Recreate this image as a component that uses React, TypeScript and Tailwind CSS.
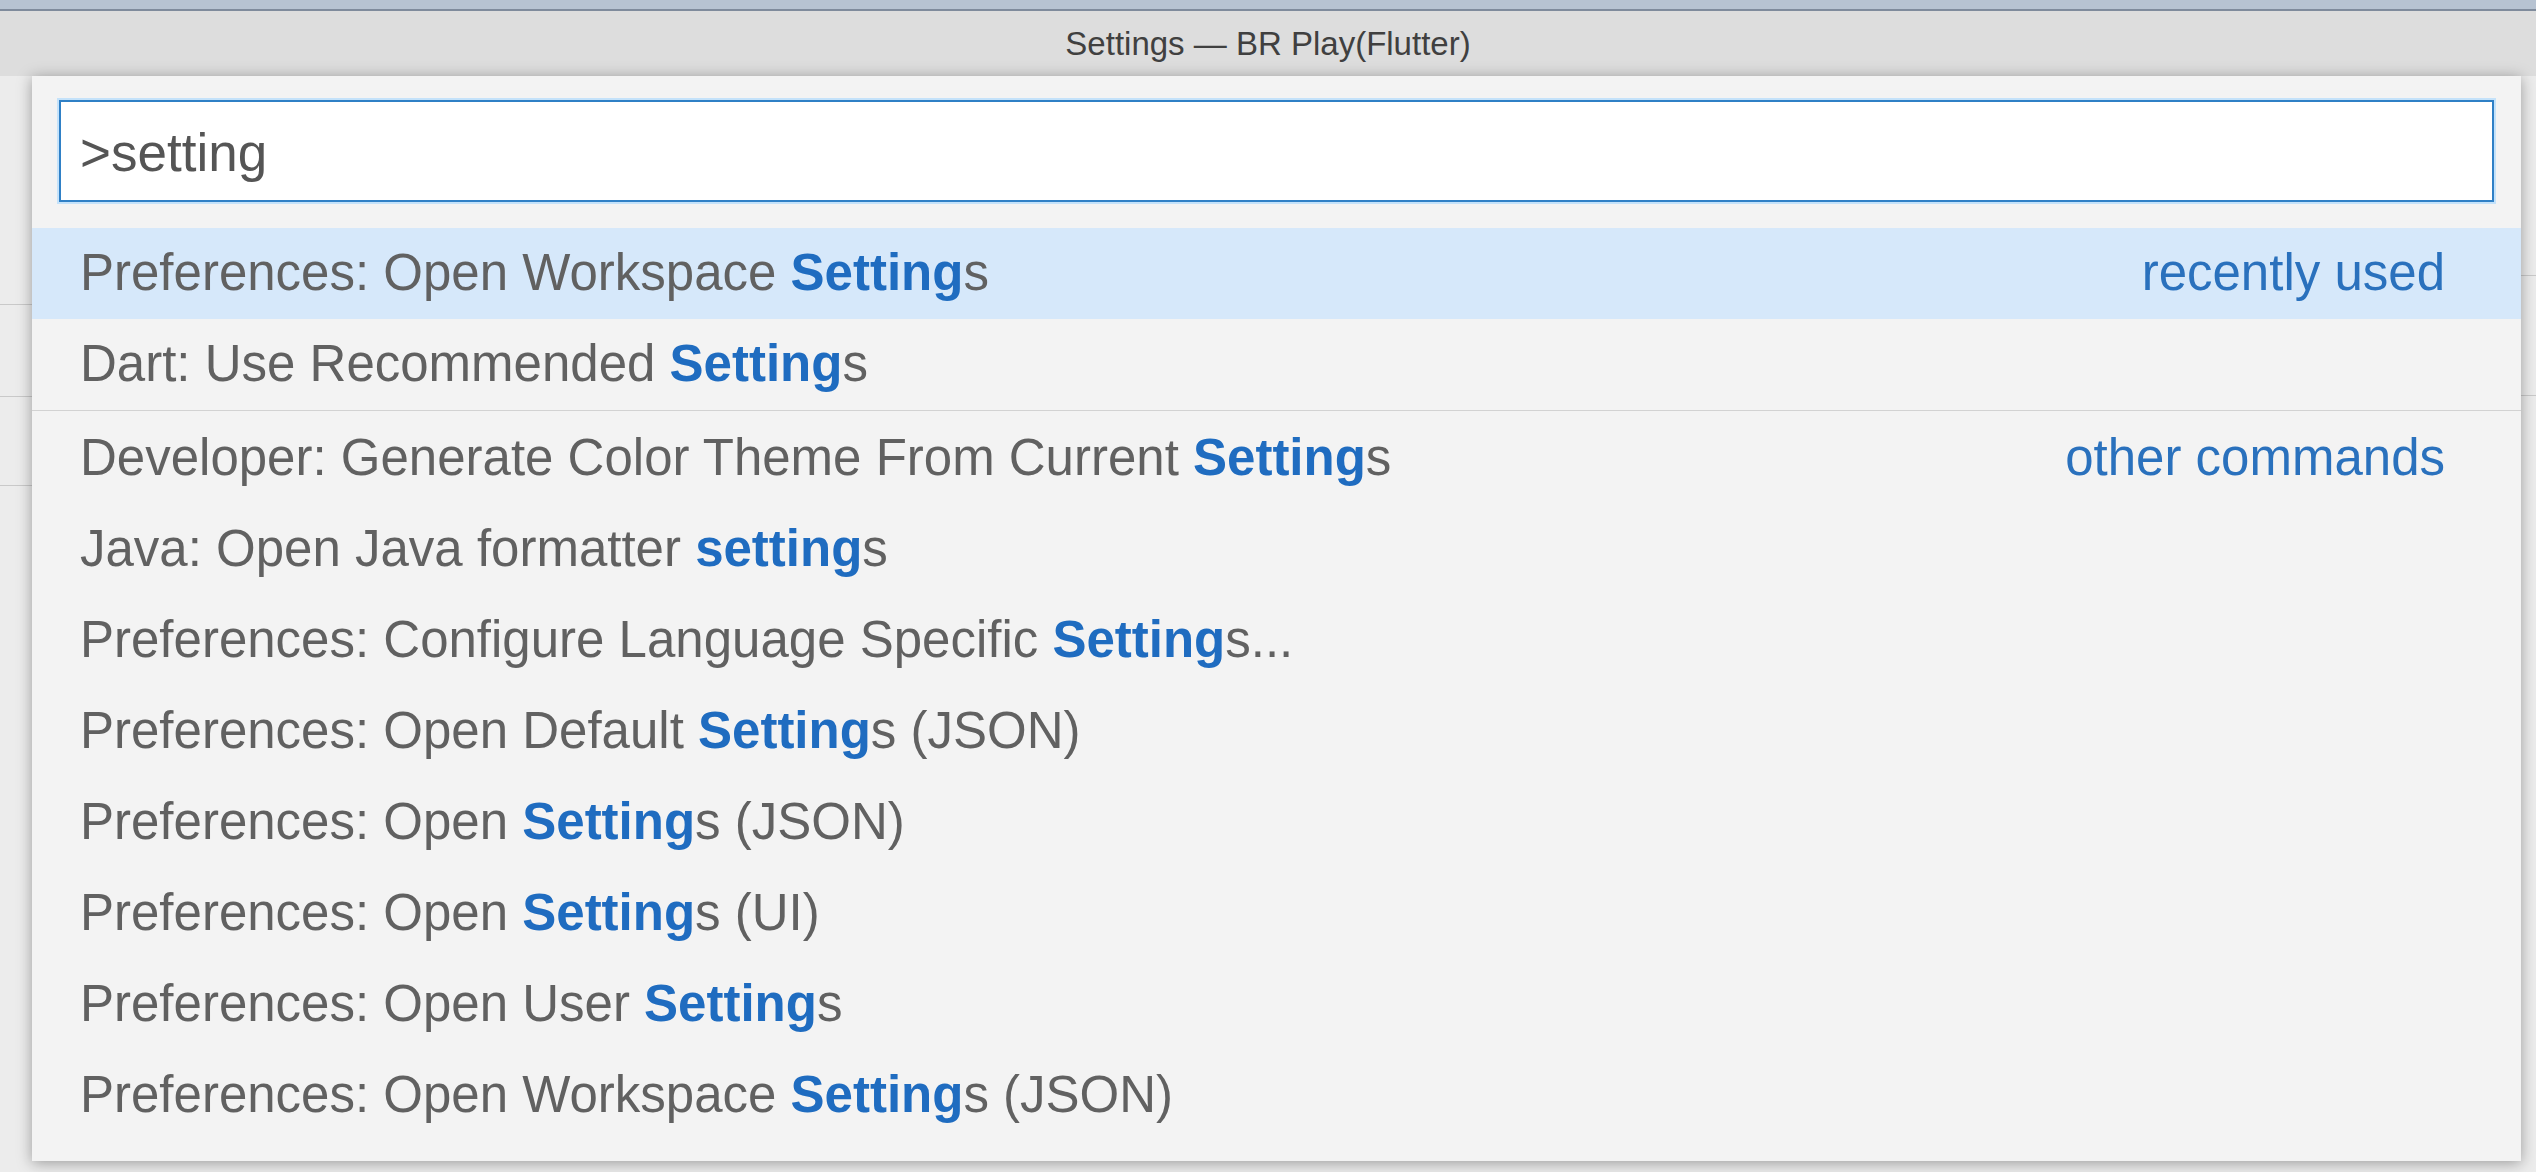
import React from 'react';

interface Cmd {
  before: string;
  match: string;
  after: string;
  label?: string;
}

const recent: Cmd[] = [
  { before: 'Preferences: Open Workspace ', match: 'Setting', after: 's', label: 'recently used' },
  { before: 'Dart: Use Recommended ', match: 'Setting', after: 's' },
];

const others: Cmd[] = [
  { before: 'Developer: Generate Color Theme From Current ', match: 'Setting', after: 's', label: 'other commands' },
  { before: 'Java: Open Java formatter ', match: 'setting', after: 's' },
  { before: 'Preferences: Configure Language Specific ', match: 'Setting', after: 's...' },
  { before: 'Preferences: Open Default ', match: 'Setting', after: 's (JSON)' },
  { before: 'Preferences: Open ', match: 'Setting', after: 's (JSON)' },
  { before: 'Preferences: Open ', match: 'Setting', after: 's (UI)' },
  { before: 'Preferences: Open User ', match: 'Setting', after: 's' },
  { before: 'Preferences: Open Workspace ', match: 'Setting', after: 's (JSON)' },
];

function Row({ cmd, active }: { cmd: Cmd; active?: boolean }) {
  return (
    <div
      className={
        'h-[91px] flex items-center justify-between pl-[48px] pr-[76px] ' +
        (active ? 'bg-[#d6e8fa]' : '')
      }
    >
      <span className="text-[51px] text-[#616161] whitespace-nowrap">
        {cmd.before}
        <span className="font-bold text-[#1f6cc0]">{cmd.match}</span>
        {cmd.after}
      </span>
      {cmd.label && <span className="text-[51px] text-[#2a71bd] whitespace-nowrap">{cmd.label}</span>}
    </div>
  );
}

export default function App() {
  return (
    <div className="w-[2536px] h-[1172px] bg-[#ececec] flex flex-col overflow-hidden font-['Liberation_Sans',Arial,sans-serif]">
      <div className="h-[11px] bg-[#b7c3d2] border-b-2 border-[#7f8b9c]" />
      <div className="h-[65px] bg-[#dddddd] flex items-center justify-center text-[33px] text-[#404040]">
        Settings — BR Play(Flutter)
      </div>

      <div className="flex-1 flex">
        {/* editor behind, left edge */}
        <div className="w-[32px] flex flex-col">
          <div className="h-[229px] border-b border-[#c9c9c9]" />
          <div className="h-[92px] border-b border-[#c9c9c9]" />
          <div className="h-[89px] border-b border-[#c9c9c9]" />
        </div>

        <div className="w-[2489px] h-[1085px] bg-[#f3f3f3] shadow-[0_2px_14px_rgba(0,0,0,0.35)] relative z-10 flex flex-col">
          <div className="px-[27px] pt-[24px]">
            <div className="h-[102px] bg-white border-2 border-[#2f80c6] shadow-[0_0_0_2px_#c4e2fa] flex items-center pl-[19px] pt-[4px] text-[53px] text-[#555555]">
              &gt;setting
            </div>
          </div>

          <div className="mt-[26px] flex flex-col">
            {recent.map((c, i) => (
              <Row key={i} cmd={c} active={i === 0} />
            ))}
            <div className="border-t border-[#d2d2d2] pt-[2px]">
              {others.map((c, i) => (
                <Row key={i} cmd={c} />
              ))}
            </div>
          </div>
        </div>

        {/* editor behind, right edge */}
        <div className="w-[15px] flex flex-col">
          <div className="h-[200px] border-b border-[#c9c9c9]" />
          <div className="h-[120px] border-b border-[#c9c9c9]" />
        </div>
      </div>
    </div>
  );
}
